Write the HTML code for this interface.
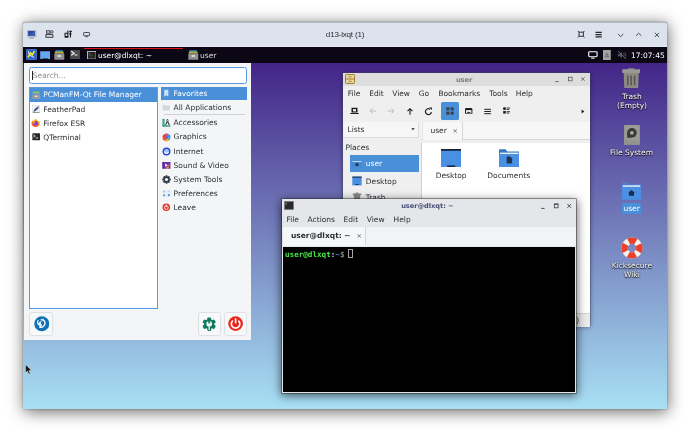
<!DOCTYPE html>
<html><head><meta charset="utf-8"><title>d13-lxqt (1)</title>
<style>
html,body{margin:0;padding:0;background:#fff;}
body{width:690px;height:432px;position:relative;overflow:hidden;font-family:"DejaVu Sans","Liberation Sans",sans-serif;font-size:7.5px;color:#2a2d33;}
.a{position:absolute;}
.t{position:absolute;white-space:pre;line-height:10px;height:10px;}
#win{will-change:transform;left:23px;top:22px;width:644.4px;height:387px;border-radius:2px 2px 0 0;box-shadow:1px 2.5px 16px rgba(0,0,0,.58),0 0 2px rgba(0,0,0,.4);background:#000;overflow:hidden;}
#tb{left:0;top:0;width:645px;height:25px;background:#dde3ed;border-top:.8px solid #b4b8c1;border-bottom:1.300px solid #e8ecf5;box-sizing:border-box;}
#panel{left:0;top:25px;width:645px;height:15.5px;background:#0b0714;}
#desk{left:0;top:40.5px;width:645px;height:346.5px;background:linear-gradient(#432588,#a8e0f4);}
/* start menu */
#menu{left:1px;top:40.5px;width:227.2px;height:277.5px;background:#f4f5f7;}
#search{left:4.8px;top:4.6px;width:216.2px;height:14.8px;border:1px solid #5b9ae1;border-radius:2.5px;background:#fff;}
#list{left:4.8px;top:24.3px;width:127.5px;height:220.4px;border:1px solid #5b9ae0;background:#fff;}
.sel{background:#4a90d9;}
.w{color:#fff;}
.btn{width:21.6px;height:22px;border:.8px solid #dfe0e4;border-radius:2.5px;background:#f7f8f9;}
/* file manager */
#fm{left:320.3px;top:51.2px;width:246.3px;height:253.3px;background:#efefef;box-shadow:0 0 0 .6px rgba(70,70,90,.6),0 1px 5px rgba(0,0,20,.45);}
#fmt{left:-.7px;top:0;width:246.3px;height:12.5px;background:#dddddd;}
/* terminal */
#term{left:259px;top:177.2px;width:294.3px;height:194px;background:#e5e6e9;box-shadow:0 1.5px 9px 1px rgba(0,0,0,.62),0 0 0 .6px rgba(40,40,50,.7);}
.dl{color:#fff;text-shadow:0 .6px 1.2px #000,0 0 1.5px rgba(0,0,0,.8);text-align:center;width:60px;}
</style></head><body>
<div id="win" class="a">
 <div id="tb" class="a">
  <svg class="a" style="left:3.6px;top:6.7px" width="10" height="9.4" viewBox="0 0 10 9.4"><rect x=".3" y=".3" width="8.800" height="6.800" rx=".7" fill="#c3c7d2" stroke="#9499aa" stroke-width=".5"/><rect x="1.100" y="1" width="6.800" height="5" fill="#2c4a9c"/><path d="M1.100 6L7.900 1V6Z" fill="#3a5db3"/><path d="M3.200 7.200h3l1 1.500H2.200z" fill="#a4a8b5"/><path d="M1.800 8.900h5.800" stroke="#b4b8c4" stroke-width=".6"/></svg>
  <svg class="a" style="left:22.2px;top:6.6px" width="9.400" height="8.600" viewBox="0 0 9.400 8.600" fill="none" stroke="#2a2d33" stroke-width=".9"><rect x="1.600" y=".8" width="3.400" height="2.400"/><circle cx="6.900" cy="1.900" r="1.250" stroke-width=".75"/><path d="M.9 6.900V4.600h7v2.300M.5 7.300h7.800" stroke-width=".95"/></svg>
  <svg class="a" style="left:41.2px;top:6.6px" width="8.600" height="8.400" viewBox="0 0 8.600 8.400" fill="none" stroke="#15171b" stroke-width="1.100"><path d="M3.900 .5V6.600H1.100V3.200H3.900M6.400 1V7.400M5.300 1.400h2.500M5.300 3.900h2.200M.8 7.300h3.600"/></svg>
  <svg class="a" style="left:60.2px;top:9.2px" width="7.600" height="5.600" viewBox="0 0 7.600 5.600" fill="none" stroke="#2a2d33" stroke-width=".85"><rect x=".6" y=".5" width="6" height="3.300" rx=".7"/><path d="M2.500 4.700h2.200" stroke-width=".9"/></svg>
  <div class="t" style="left:297px;top:6.9px;width:50px;text-align:center;font-family:'Liberation Sans',sans-serif;font-size:8.100px;letter-spacing:-.22px;color:#2b2f35;">d13-lxqt (1)</div>
  <svg class="a" style="left:553.8px;top:7px" width="8.4" height="8.4" viewBox="0 0 9 9" fill="none" stroke="#23262b" stroke-width="1"><rect x="2.2" y="2.3" width="4.6" height="4.4"/><path d="M.8 .9l1.4 1.4M8.2 .9L6.8 2.3M.8 8.1l1.4-1.4M8.2 8.1L6.8 6.7" stroke-width=".9"/></svg>
  <svg class="a" style="left:572px;top:8.3px" width="7.6" height="7.6" viewBox="0 0 8 8" stroke="#23262b" stroke-width="1.3"><path d="M.5 1.4h6.6M.5 3.8h6.6M.5 6.2h6.6"/></svg>
  <svg class="a" style="left:593.5px;top:9.6px" width="8" height="5" viewBox="0 0 8 5" fill="none" stroke="#3a3e45" stroke-width=".9"><path d="M1 1l2.7 2.6L6.4 1"/></svg>
  <svg class="a" style="left:611.8px;top:9.2px" width="8" height="5" viewBox="0 0 8 5" fill="none" stroke="#3a3e45" stroke-width=".9"><path d="M1 3.8l2.7-2.6L6.4 3.8"/></svg>
  <svg class="a" style="left:631px;top:9.3px" width="6" height="6" viewBox="0 0 6 6" fill="none" stroke="#3a3e45" stroke-width=".9"><path d="M.8 .8l4.2 4.2M5 .8L.8 5"/></svg>
 </div>
 <div id="panel" class="a">
  <svg class="a" style="left:3px;top:2.200px" width="11" height="10.800" viewBox="0 0 11 10.800"><rect x=".3" y=".3" width="10.400" height="10.200" rx="1.200" fill="#2a5cd2" stroke="#5a96ea" stroke-width=".7"/><path d="M2.500 2.600Q2.400 6.400 7.800 8.300" fill="none" stroke="#cfdcf6" stroke-width="1.200" stroke-linecap="round"/><path d="M2 8.500L4.600 3.900 6.300 5.900 8.500 2" fill="none" stroke="#f6e61c" stroke-width="1.600" stroke-linejoin="miter" stroke-linecap="butt"/></svg>
  <svg class="a" style="left:16.900px;top:3.900px" width="10.400" height="8.400" viewBox="0 0 10.400 8.400"><path d="M.2 .2h10v8H8V7.500H2.500V8.200H.2z" fill="#64a7f2"/></svg>
  <svg class="a" style="left:31.200px;top:2.800px" width="10.600" height="10.200" viewBox="0 0 10.600 10.200"><path d="M1.700 .3h7l.5 1.200H1.200z" fill="#3f8ae0"/><path d="M1.200 1.300h8l.4 1.100H.9z" fill="#5fbf6a"/><path d="M.9 2.300h8.700l.3 1.200H.6z" fill="#f0c23a"/><rect x=".3" y="3.400" width="10" height="6.400" rx=".5" fill="#8e8e8e"/><rect x="3.500" y="5.200" width="3.600" height="1.500" rx=".3" fill="#ececec"/></svg>
  <svg class="a" style="left:47px;top:3.100px" width="10.400" height="9.200" viewBox="0 0 10.400 9.200"><rect x=".1" y=".1" width="10.100" height="9" rx=".5" fill="#4a4a4a"/><path d="M1.200 1.300l3 2-3 2" fill="none" stroke="#fff" stroke-width="1.100"/><path d="M4.600 5h2.800" stroke="#fff" stroke-width="1.200"/></svg>
  <div class="a" style="left:61px;top:.6px;width:98.800px;height:1.600px;background:#e0151a"></div>
  <svg class="a" style="left:63.700px;top:3.800px" width="9.600" height="8.600" viewBox="0 0 9.600 8.600"><rect x=".5" y=".5" width="8.600" height="7.600" fill="#242424" stroke="#c4c4c4" stroke-width=".9"/><path d="M1.800 2.200l1.400 1-1.400 1M3.600 4.800h1.600" fill="none" stroke="#8a8a8a" stroke-width=".6"/></svg>
  <div class="t w" style="left:74.9px;top:4.2px;">user@dlxqt: ~</div>
  <svg class="a" style="left:165px;top:2.800px" width="10.600" height="10.200" viewBox="0 0 10.600 10.200"><path d="M1.700 .3h7l.5 1.200H1.200z" fill="#3f8ae0"/><path d="M1.200 1.300h8l.4 1.100H.9z" fill="#5fbf6a"/><path d="M.9 2.300h8.700l.3 1.200H.6z" fill="#f0c23a"/><rect x=".3" y="3.400" width="10" height="6.400" rx=".5" fill="#8e8e8e"/><rect x="3.500" y="5.200" width="3.600" height="1.500" rx=".3" fill="#ececec"/></svg>
  <div class="t" style="left:177px;top:4.2px;color:#dcdcdc">user</div>
  <svg class="a" style="left:565px;top:4px" width="10" height="8" viewBox="0 0 10 8" fill="none" stroke="#fff" stroke-width="1.1"><rect x=".7" y=".7" width="8.4" height="5" rx=".9"/><path d="M3.2 7.2h3.4" stroke-width="1"/></svg>
  <svg class="a" style="left:580.400px;top:2.700px" width="7.800" height="10.200" viewBox="0 0 7.800 10.200"><rect x="0" y="0" width="7.800" height="10.200" fill="#a3a3a0"/><path d="M3.900 2.400L6 5.400H1.800z" fill="#6f6f6f"/><rect x="1.800" y="6.100" width="4.200" height="1.100" fill="#6f6f6f"/></svg>
  <svg class="a" style="left:593.5px;top:2.8px" width="10" height="10" viewBox="0 0 10 10" fill="none" stroke="#55565f" stroke-width=".9"><path d="M1.2 3.8h1.6L5 1.8v6.4L2.8 6.2H1.2z" fill="#55565f" stroke="none"/><path d="M6.3 3.2a2.4 2.4 0 0 1 0 3.6M7.5 2a4 4 0 0 1 0 6"/><path d="M1 1l8 8" stroke="#6a6b75" stroke-width=".9"/></svg>
  <div class="t w" style="left:608px;top:4.2px;">17:07:45</div>
 </div>
 <div id="desk" class="a"></div>

 <svg class="a" style="left:599.100px;top:46px" width="18.400" height="20.200" viewBox="0 0 18.400 20.200"><rect x="6" y=".2" width="6.400" height="1.600" rx=".4" fill="#8f8f88"/><rect x=".2" y="1.200" width="18" height="3.800" rx=".5" fill="#9a9a92"/><path d="M1.700 5h15l-.5 14.400q0 .6-.6.600H2.800q-.6 0-.6-.600z" fill="#8b8b84"/><path d="M5.800 7.400v9.800M9.200 7.400v9.800M12.600 7.400v9.800" stroke="#55554f" stroke-width="1.500"/></svg>
 <div class="t dl" style="left:578.8px;top:69.7px">Trash</div>
 <div class="t dl" style="left:579px;top:79px">(Empty)</div>
 <svg class="a" style="left:600.600px;top:103px" width="16" height="19.800" viewBox="0 0 16 19.800"><rect x=".1" y=".1" width="15.800" height="19.600" rx=".6" fill="#9b9b95"/><rect x=".1" y="15.400" width="15.800" height="4.300" fill="#93938d"/><circle cx="7.900" cy="7.800" r="4.800" fill="#3a3a3a"/><path d="M3.100 7.800v5h4.800z" fill="#3a3a3a"/><circle cx="7.900" cy="7.800" r="1.900" fill="#a9a9a3"/></svg>
 <div class="t dl" style="left:578.5px;top:125.6px">File System</div>
 <svg class="a" style="left:599px;top:160.200px" width="19" height="17.800" viewBox="0 0 19 17.800"><path d="M0 .9q0-.8.800-.8h5.400l1.600 2h10.400q.8 0 .8.800v2H0z" fill="#4a90e2" opacity=".38"/><rect x="0" y="2.900" width="19" height="14.800" rx=".6" fill="#4a90e2"/><rect x=".8" y="3.400" width="17.400" height="1.300" fill="#f4f8fd"/><path d="M9.500 7.900l3.500 3h-1v2.900H7v-2.900H6z" fill="#1c2c4a"/></svg>
 <div class="a" style="left:599px;top:181.200px;width:19px;height:11.200px;background:#4a90d9"></div>
 <div class="t w" style="left:578.600px;top:182px;width:60px;text-align:center">user</div>
 <svg class="a" style="left:597.700px;top:214.700px" width="22" height="22" viewBox="0 0 22 22"><circle cx="11" cy="11" r="7.400" fill="none" stroke="#f1f1f1" stroke-width="6.400"/><circle cx="11" cy="11" r="7.400" fill="none" stroke="#e9412c" stroke-width="6.400" stroke-dasharray="7.490 4.134" stroke-dashoffset="3.745"/></svg>
 <div class="t dl" style="left:578.900px;top:238.700px">Kicksecure</div>
 <div class="t dl" style="left:578.900px;top:247.500px">Wiki</div>
 <svg class="a" style="left:1.7px;top:342.1px" width="7.4" height="11.1" viewBox="0 0 8 12"><path d="M.6 .6v9l2.100-2 1.500 3.400 1.500-.7L4.200 7h2.900z" fill="#111" stroke="#eee" stroke-width=".5"/></svg>
 <div id="menu" class="a">
  <div id="search" class="a"><div class="t" style="left:3px;top:2.5px;color:#8a8d92;">Search...</div><div class="a" style="left:2.5px;top:2.5px;width:.8px;height:9.5px;background:#222"></div></div>
  <div id="list" class="a">
<div class="a sel" style="left:0;top:-0.2px;width:127.5px;height:14px"><svg class="a" style="left:2.1px;top:3.2px" width="8.4" height="8.4" viewBox="0 0 10.6 10"><path d="M1.6 .4h7.4l.5 1.2H1.1z" fill="#6fbf4a"/><path d="M1.1 1.6h8.4l.3 1.2H.8z" fill="#f3d23c"/><path d="M.8 2.8h9l.3 1.2H.5z" fill="#4a90e2"/><rect x=".4" y="4" width="9.8" height="5.8" rx=".5" fill="#9a9a9a"/><rect x="3.6" y="5.6" width="3.4" height="1.6" fill="#e8e8e8"/></svg><div class="t w" style="left:13.5px;top:2.4px">PCManFM-Qt File Manager</div></div>
<div class="a" style="left:0;top:13.9px;width:127.5px;height:14px"><svg class="a" style="left:2.1px;top:3.2px" width="8.4" height="8.4" viewBox="0 0 10 10"><rect x=".8" y=".6" width="8.4" height="8.8" fill="#f4f4f4" stroke="#c9c9c9" stroke-width=".5"/><path d="M1.6 8.2C2.4 5 5 2.2 8.6 1.6 7.8 4.6 5.4 7.2 1.6 8.2z" fill="#3f5e8c"/><path d="M1.2 8.9h7.6" stroke="#555" stroke-width=".7"/></svg><div class="t" style="left:13.5px;top:3px">FeatherPad</div></div>
<div class="a" style="left:0;top:27.8px;width:127.5px;height:14px"><svg class="a" style="left:1.500px;top:2.700px" width="9.400" height="9.400" viewBox="0 0 10 10"><defs><linearGradient id="ffg" x1=".7" y1="0" x2=".2" y2="1"><stop offset="0" stop-color="#ffd43a"/><stop offset=".5" stop-color="#ff8a1c"/><stop offset="1" stop-color="#f5352a"/></linearGradient></defs><path d="M5 .7C6 1 6.800 1.700 7.400 2.600 8.600 3 9.500 4.300 9.500 5.700 9.500 8 7.500 9.700 5 9.700 2.500 9.700 .5 8 .5 5.600 .5 4.300 1 3.200 1.900 2.400 1.900 3 2.200 3.400 2.600 3.600 3 2.400 3.900 1.300 5 .7z" fill="url(#ffg)"/><circle cx="5.200" cy="5.600" r="2.400" fill="#7a3fd6"/><path d="M2.800 4.400C3.500 3.800 4.500 3.900 5.100 4.500 4.300 4.500 3.800 5 3.800 5.700 3.100 5.600 2.700 5 2.800 4.400z" fill="#ffb52e"/></svg><div class="t" style="left:13.5px;top:3px">Firefox ESR</div></div>
<div class="a" style="left:0;top:41.9px;width:127.5px;height:14px"><svg class="a" style="left:2.1px;top:3.8px" width="8.4" height="7.4" viewBox="0 0 10 9"><rect x=".3" y=".3" width="9.4" height="8.4" rx=".5" fill="#2b2b2b"/><path d="M1.6 2l2.2 1.6-2.2 1.6" fill="none" stroke="#fff" stroke-width=".9"/><path d="M4.4 6h3" stroke="#fff" stroke-width=".9"/></svg><div class="t" style="left:13.5px;top:3px">QTerminal</div></div>
</div>
<div class="a sel" style="left:137.2px;top:24.4px;width:85.6px;height:13.2px"><svg class="a" style="left:1.1px;top:2.4px" width="8.6" height="8.6" viewBox="0 0 10 10"><path d="M2.6 1h4.8v8L5 7.2 2.6 9z" fill="#cfe0f6"/></svg><div class="t w" style="left:12.4px;top:2.2px">Favorites</div></div>
<div class="a" style="left:137.2px;top:38.3px;width:85.6px;height:13.2px"><svg class="a" style="left:1.1px;top:2.4px" width="8.6" height="8.6" viewBox="0 0 10 10"><path d="M.8 2h3.2l.9 1h4.3v5.6H.8z" fill="#d6d7da"/></svg><div class="t" style="left:12.4px;top:2.2px">All Applications</div></div>
<div class="a" style="left:137.2px;top:53.7px;width:85.6px;height:13.2px"><svg class="a" style="left:.9px;top:2.2px" width="9" height="9" viewBox="0 0 10 10"><rect x=".6" y="1" width="2.200" height="8" fill="#15906a"/><path d="M1 2.500h1M1 4h1M1 5.500h1M1 7h1" stroke="#d8f0e6" stroke-width=".5"/><path d="M5.600 1l.9 0 .3 2.200 1.900 4.600-1 .5-1.600-3.600-1.600 3.600-1-.5 1.900-4.600z" fill="#2f3437"/><circle cx="6" cy="2.600" r="1" fill="#f3f4f6" stroke="#2f3437" stroke-width=".6"/><rect x=".6" y="8.300" width="8.800" height="1.300" fill="#15906a"/></svg><div class="t" style="left:12.4px;top:2px">Accessories</div></div>
<div class="a" style="left:137.2px;top:67.9px;width:85.6px;height:13.2px"><svg class="a" style="left:.9px;top:2.2px" width="9" height="9" viewBox="0 0 10 10"><circle cx="5" cy="2.700" r="2.300" fill="#e9488e"/><circle cx="7.100" cy="3.800" r="2.300" fill="#3d8bf0"/><circle cx="7.100" cy="6.200" r="2.300" fill="#35b4e6"/><circle cx="5" cy="7.300" r="2.300" fill="#f7b52c"/><circle cx="2.900" cy="6.200" r="2.300" fill="#f2602a"/><circle cx="2.900" cy="3.800" r="2.300" fill="#f0453a"/><circle cx="5" cy="5" r="1.700" fill="#8a4fd0"/></svg><div class="t" style="left:12.4px;top:2px">Graphics</div></div>
<div class="a" style="left:137.2px;top:82.1px;width:85.6px;height:13.2px"><svg class="a" style="left:.9px;top:2.2px" width="9" height="9" viewBox="0 0 10 10"><circle cx="5" cy="5" r="4.400" fill="#2748d4"/><circle cx="5" cy="5" r="2.800" fill="#9cc8ff"/><path d="M2.300 5.300Q5 7 7.700 5.300 7.200 7.800 5 7.800 2.800 7.800 2.300 5.300z" fill="#f4f8ff"/></svg><div class="t" style="left:12.4px;top:2px">Internet</div></div>
<div class="a" style="left:137.2px;top:96.2px;width:85.6px;height:13.2px"><svg class="a" style="left:.9px;top:2.2px" width="9" height="9" viewBox="0 0 10 10"><rect x=".6" y="1.200" width="8.800" height="7.400" rx=".5" fill="#6a2fb5"/><rect x=".6" y="1.200" width="1.400" height="7.400" fill="#4d1f93"/><path d="M3.400 2.800l3.200 1.900-3.200 1.900z" fill="#f1e6ff"/><circle cx="6" cy="7.600" r="1.300" fill="#f79a1e"/><path d="M7 7.600V4.400l1.800.6" fill="none" stroke="#f79a1e" stroke-width=".8"/></svg><div class="t" style="left:12.4px;top:2px">Sound &amp; Video</div></div>
<div class="a" style="left:137.2px;top:110.3px;width:85.6px;height:13.2px"><svg class="a" style="left:.9px;top:2.2px" width="9" height="9" viewBox="0 0 10 10"><g fill="#2b3a48"><rect x="4" y=".3" width="2" height="9.400" rx=".3" transform="rotate(0 5 5)"/><rect x="4" y=".3" width="2" height="9.400" rx=".3" transform="rotate(45 5 5)"/><rect x="4" y=".3" width="2" height="9.400" rx=".3" transform="rotate(90 5 5)"/><rect x="4" y=".3" width="2" height="9.400" rx=".3" transform="rotate(135 5 5)"/><circle cx="5" cy="5" r="3.500"/></g><circle cx="5" cy="5" r="1.800" fill="#f3f4f6"/></svg><div class="t" style="left:12.4px;top:2px">System Tools</div></div>
<div class="a" style="left:137.2px;top:124.5px;width:85.6px;height:13.2px"><svg class="a" style="left:.9px;top:2.2px" width="9" height="9" viewBox="0 0 10 10"><rect x=".8" y="1.400" width="8.400" height="7.200" fill="#e3edf7"/><rect x="1.200" y="1.800" width="2.200" height="1.800" fill="#9cc4ee"/><rect x="6.400" y="1.800" width="2.400" height="1.800" fill="#c4daf2"/><rect x="1.200" y="6" width="1.800" height="2" fill="#4a90e2"/><rect x="6.800" y="5.600" width="1.800" height="2.400" fill="#4a90e2"/><rect x="3.800" y="4" width="2.200" height="1.600" fill="#f6f9fc"/></svg><div class="t" style="left:12.4px;top:2px">Preferences</div></div>
<div class="a" style="left:137.2px;top:138.6px;width:85.6px;height:13.2px"><svg class="a" style="left:1.1px;top:2.4px" width="8.6" height="8.6" viewBox="0 0 10 10"><circle cx="5" cy="5" r="4.400" fill="#e5332a"/><circle cx="5" cy="5.300" r="2.200" fill="none" stroke="#fff" stroke-width=".9"/><path d="M5 2v3" stroke="#fff" stroke-width="1"/><path d="M5 1.600v3.600" stroke="#e5332a" stroke-width="2.200" opacity="0"/></svg><div class="t" style="left:12.4px;top:2px">Leave</div></div>
<div class="a" style="left:139.5px;top:51.500px;width:81.500px;height:1px;background:#cdcfd4"></div>
<div class="a btn" style="left:5.200px;top:249.500px"><svg class="a" style="left:3.400px;top:3.400px" width="15.600" height="15.600" viewBox="0 0 16 16"><circle cx="8" cy="8" r="7.700" fill="#0f70b6"/><path d="M4.200 4.600C3 6.400 3.800 8.800 5.800 9.400 5 8.200 5.400 6.800 6.600 6.200 6 7.400 6.400 8.800 7.600 9.400" fill="none" stroke="#f2f8fd" stroke-width="1.300" stroke-linecap="round"/><path d="M7.600 3.800C10.400 3.600 12 6.200 11 8.800 10.200 10.800 8.200 11.800 6 11.400" fill="none" stroke="#f2f8fd" stroke-width="1.500" stroke-linecap="round"/><path d="M5 11.200l2.200-1.400.2 2.800z" fill="#f2f8fd"/><path d="M8.400 3.200l1.600-.6-.4 1.800z" fill="#f2f8fd"/></svg></div>
<div class="a btn" style="left:173.600px;top:249.700px"><svg class="a" style="left:3.700px;top:3.500px" width="14.400" height="14.400" viewBox="0 0 14 14"><g fill="#0f7a5e"><rect x="5.100" y=".4" width="3.800" height="13.200" rx="1.100" transform="rotate(0 7 7)"/><rect x="5.100" y=".4" width="3.800" height="13.200" rx="1.100" transform="rotate(60 7 7)"/><rect x="5.100" y=".4" width="3.800" height="13.200" rx="1.100" transform="rotate(120 7 7)"/><circle cx="7" cy="7" r="4.900"/></g><circle cx="7" cy="6.700" r="2.700" fill="#f7f8f9"/><rect x="6.100" y="2.600" width="1.800" height="3.600" fill="#0f7a5e"/><path d="M7 9v3.600" stroke="#e8d8da" stroke-width="1.500"/></svg></div>
<div class="a btn" style="left:199.500px;top:249.700px"><svg class="a" style="left:3.400px;top:3.300px" width="15.200" height="15.200" viewBox="0 0 14 14"><circle cx="7" cy="7" r="6.800" fill="#ea251b"/><path d="M4.500 4.300a3.900 3.900 0 1 0 5 0" fill="none" stroke="#fff" stroke-width="1.500"/><path d="M7 2.200v4.600" stroke="#fff" stroke-width="1.500"/></svg></div>
 </div>
 <div id="fm" class="a"><div class="a" style="left:.7px;top:0;width:245px;height:253px"><div id="fmt" class="a">
  <svg class="a" style="left:1.3px;top:1.3px" width="10" height="10" viewBox="0 0 10 10"><rect x=".5" y=".5" width="9" height="9" rx=".8" fill="#e8d9a8" stroke="#a67c2a" stroke-width="1"/><path d="M.5 5h9" stroke="#a67c2a" stroke-width="1"/><path d="M3.400 2.800h3.200M3.400 7.300h3.200" stroke="#a67c2a" stroke-width=".9"/></svg>
  <div class="t" style="left:100.8px;top:1.400px;width:40px;text-align:center;font-weight:bold;font-size:6.600px;color:#7a7a7a">user</div>
  <svg class="a" style="left:209.500px;top:3.200px" width="32" height="7" viewBox="0 0 32 7" fill="none" stroke="#5e5e5e" stroke-width=".9"><path d="M2.400 5.600h3.200"/><rect x="15.500" y="1.200" width="3.600" height="3.600" stroke-width=".8"/><path d="M28.200 1.200l3.400 3.600M31.600 1.200l-3.400 3.600" stroke-width=".8"/></svg>
 </div>
 <div class="a" style="left:0;top:12.500px;width:245px;height:14.500px;background:#efefef">
  <div class="t" style="left:3.8px;top:3.600px">File</div><div class="t" style="left:25.2px;top:3.600px">Edit</div><div class="t" style="left:48.2px;top:3.600px">View</div><div class="t" style="left:74.8px;top:3.600px">Go</div><div class="t" style="left:94.4px;top:3.600px">Bookmarks</div><div class="t" style="left:145.2px;top:3.600px">Tools</div><div class="t" style="left:171.8px;top:3.600px">Help</div>
 </div>
 <div class="a" style="left:0;top:27px;width:245px;height:22px;background:#efefef">
  <svg class="a" style="left:5.900px;top:6.700px" width="9" height="8" viewBox="0 0 9 8"><path d="M1.500 .7h6v4.900h-6z" fill="#1d1d1d"/><rect x="3" y="2.100" width="3" height="2.300" fill="#efefef"/><path d="M.3 6.500h8.400" stroke="#1d1d1d" stroke-width="1.200"/></svg>
  <svg class="a" style="left:24.7px;top:7px" width="8" height="8" viewBox="0 0 8 8" fill="none" stroke="#bdbdbd" stroke-width="1"><path d="M7.200 4H1.200M3.600 1.400L1 4l2.600 2.600"/></svg>
  <svg class="a" style="left:43px;top:7px" width="8" height="8" viewBox="0 0 8 8" fill="none" stroke="#bdbdbd" stroke-width="1"><path d="M.8 4h6M4.400 1.400L7 4 4.400 6.600"/></svg>
  <svg class="a" style="left:61.8px;top:6.500px" width="8" height="9" viewBox="0 0 8 9" fill="none" stroke="#1d1d1d" stroke-width="1.100"><path d="M4 7.700V1.800M1.500 4.200L4 1.700 6.500 4.200"/></svg>
  <svg class="a" style="left:79.9px;top:6.500px" width="9" height="9" viewBox="0 0 9 9" fill="none" stroke="#1d1d1d" stroke-width="1.200"><path d="M7.400 5.200A3 3 0 1 1 6.200 2.200"/><path d="M5.300 .5h2.600v2.600z" fill="#1d1d1d" stroke="none"/></svg>
  <div class="a" style="left:97.5px;top:1.800px;width:18px;height:18px;background:#4a90d9;border-radius:1.500px"><svg class="a" style="left:5px;top:5px" width="8" height="8" viewBox="0 0 8 8" fill="#3b4048"><rect x=".3" y=".3" width="3.100" height="3.100"/><rect x="4.600" y=".3" width="3.100" height="3.100"/><rect x=".3" y="4.600" width="3.100" height="3.100"/><rect x="4.600" y="4.600" width="3.100" height="3.100"/></svg></div>
  <svg class="a" style="left:121.300px;top:7.800px" width="7.400" height="6.400" viewBox="0 0 7.400 6.400"><rect x=".5" y=".5" width="6.400" height="5.400" rx=".4" fill="none" stroke="#1d1d1d" stroke-width="1"/><rect x=".5" y=".5" width="6.400" height="1.600" fill="#1d1d1d"/><path d="M1.800 5l1.300-1.500 1 .9.700-.5.900 1.100z" fill="#1d1d1d"/></svg>
  <svg class="a" style="left:140px;top:7.600px" width="7.200" height="7" viewBox="0 0 7.200 7" stroke="#1d1d1d" stroke-width="1"><path d="M.3 1.300h6.600M.3 3.500h6.600M.3 5.700h6.600"/></svg>
  <svg class="a" style="left:158.600px;top:7.200px" width="7.600" height="7.200" viewBox="0 0 7.600 7.200" fill="#1d1d1d"><rect x=".2" y=".3" width="2.600" height="2.600"/><rect x=".2" y="4" width="2.600" height="2.600"/><rect x="3.600" y=".6" width="3.800" height=".9"/><rect x="3.600" y="2" width="2.600" height=".8"/><rect x="3.600" y="4.300" width="3.800" height=".9"/><rect x="3.600" y="5.700" width="2.600" height=".8"/></svg>
  <svg class="a" style="left:237.5px;top:8.500px" width="4" height="5" viewBox="0 0 4 5"><path d="M.6 .4L3.400 2.500.6 4.600z" fill="#1d1d1d"/></svg>
 </div>
 <div class="a" style="left:0;top:49px;width:74px;height:15px;background:#f6f6f6;border-bottom:.8px solid #dcdcdc;border-right:.8px solid #dcdcdc">
  <div class="t" style="left:3.500px;top:2.600px">Lists</div>
  <svg class="a" style="left:66.800px;top:6.300px" width="4" height="2.600" viewBox="0 0 5 3"><path d="M.3 .3h4.400L2.500 2.800z" fill="#2a2a2a"/></svg>
 </div>
 <div class="a" style="left:77.500px;top:49px;width:168.500px;height:17.300px;background:#f7f7f7;border-bottom:.8px solid #d8d8d8"></div>
 <div class="a" style="left:78px;top:49px;width:39.500px;height:18px;background:#f8f8f8;border-right:.8px solid #d6d6d6;border-left:.8px solid #e0e0e0">
  <div class="t" style="left:7.400px;top:3.600px">user</div><div class="t" style="left:29.600px;top:3.800px;font-size:6.500px;color:#555">×</div>
 </div>
 <div class="t" style="left:1.400px;top:69.800px">Places</div>
 <div class="a sel" style="left:5.700px;top:81.800px;width:69.300px;height:17px">
  <svg class="a" style="left:2.500px;top:4px" width="10" height="9" viewBox="0 0 10 9"><path d="M.3 .6h3.400l.8.900h5.200v7H.3z" fill="#4587d2"/><rect x=".3" y="2" width="9.400" height=".8" fill="#dce9f8"/><path d="M5 3.800l2 1.700H6.400v1.600H3.600V5.500H3z" fill="#1f3554"/></svg>
  <div class="t w" style="left:16.100px;top:3.600px">user</div>
 </div>
 <div class="a" style="left:5.700px;top:98.800px;width:69.300px;height:17px">
  <svg class="a" style="left:2.500px;top:3.800px" width="10" height="10" viewBox="0 0 10 10"><rect x=".3" y=".6" width="9.400" height="8.800" fill="#4a90e2"/><rect x=".3" y=".6" width="9.400" height="1.200" fill="#1f3554"/><rect x="3.200" y="8" width="3.600" height=".9" fill="#1f3554"/></svg>
  <div class="t" style="left:16.100px;top:4.600px">Desktop</div>
 </div>
 <div class="a" style="left:5.700px;top:115.800px;width:69.300px;height:17px">
  <svg class="a" style="left:2.500px;top:3px" width="10" height="10" viewBox="0 0 10 10"><path d="M1.600 3h6.800l-.6 6.600H2.200z" fill="#8a8a8a"/><rect x=".8" y="1.600" width="8.400" height="1.300" fill="#777"/><rect x="3.600" y=".6" width="2.800" height="1" fill="#777"/></svg>
  <div class="t" style="left:16.100px;top:3.600px">Trash</div>
 </div>
 <div class="a" style="left:77.400px;top:69.600px;width:167.300px;height:170.200px;background:#fff;border-left:.6px solid #d0d0d0"></div>
 <svg class="a" style="left:97px;top:75.7px" width="20.500" height="18.500" viewBox="0 0 20.500 18.500"><rect x="0" y="0" width="20.500" height="18.500" rx=".8" fill="#4a90e2"/><rect x="0" y="0" width="20.500" height="1.800" fill="#16233a"/><rect x="6.200" y="16.400" width="8" height="1.500" fill="#16233a"/></svg>
 <div class="t" style="left:82.2px;top:98px;width:50px;text-align:center">Desktop</div>
 <svg class="a" style="left:154.9px;top:75.5px" width="20.500" height="18.700" viewBox="0 0 20.500 18.700"><path d="M0 1.200q0-.9.900-.9h5.600l1.800 2.200h11.300q.9 0 .9.900v14.400q0 .9-.9.900H.9q-.9 0-.9-.9z" fill="#3577c4"/><rect x="1" y="3.600" width="18.500" height="1.400" fill="#e6f0fb"/><path d="M0 5h20.500v12.800q0 .9-.9.900H.9q-.9 0-.9-.9z" fill="#4a90e2"/><path d="M7.600 7.600h3.600l1.900 1.900v4.900H7.600z" fill="#1f3554"/></svg>
 <div class="t" style="left:134.7px;top:98px;width:60px;text-align:center">Documents</div>
 <div class="a" style="left:-.7px;top:239.600px;width:246.300px;height:13.700px;background:#ececec;border-top:.6px solid #d4d4d4"><div class="t" style="right:10.500px;top:2.200px">Free space: 14.3 GiB (Total: 19.5 GiB)</div></div>
</div> </div>
 <div id="term" class="a">
  <svg class="a" style="left:1.600px;top:2px" width="10" height="9" viewBox="0 0 10 9"><rect x=".3" y=".3" width="9.400" height="8.400" fill="#2a2a2a" stroke="#8d8d8d" stroke-width=".6"/><path d="M1.500 1.800l1.300.9-1.300.9" fill="none" stroke="#ccc" stroke-width=".6"/></svg>
  <div class="t" style="left:105.4px;top:2px;width:80px;text-align:center;font-weight:bold;font-size:6.600px;color:#474d78">user@dlxqt: ~</div>
  <svg class="a" style="left:257.4px;top:3.400px" width="34" height="7" viewBox="0 0 34 7" fill="none" stroke="#3c3f4a" stroke-width=".9"><path d="M2.200 5.400h3.400"/><rect x="15.300" y="1" width="3.800" height="3.800" stroke-width=".8"/><path d="M15.300 1.300h3.800" stroke-width="1.100"/><path d="M28.400 1l3.600 3.800M32 1l-3.600 3.800" stroke-width=".9"/></svg>
  <div class="a" style="left:0;top:13px;width:294.300px;height:14.500px;background:#e5e6e9">
   <div class="t" style="left:4.4px;top:3.200px">File</div><div class="t" style="left:25.6px;top:3.200px">Actions</div><div class="t" style="left:61.6px;top:3.200px">Edit</div><div class="t" style="left:84.8px;top:3.200px">View</div><div class="t" style="left:111.6px;top:3.200px">Help</div>
  </div>
  <div class="a" style="left:.5px;top:27.500px;width:293.300px;height:19.500px;background:#f2f3f5"></div>
  <div class="a" style="left:.5px;top:27.500px;width:82.500px;height:18px;background:#f5f6f8;border-right:.7px solid #d3d5da">
   <div class="t" style="left:8.400px;top:4px;font-weight:bold">user@dlxqt: ~</div><div class="t" style="left:74px;top:4.200px;font-size:6.500px;color:#555">×</div>
  </div>
  <div class="a" style="left:1px;top:47.600px;width:292.300px;height:145.600px;background:#000">
   <div class="t" style="left:2px;top:3px;font-family:'DejaVu Sans Mono','Liberation Mono',monospace;font-weight:bold;font-size:7.600px;color:#4be34b">user@dlxqt<span style="color:#d6d6d6">:</span><span style="color:#5c7be8">~</span><span style="color:#b9b9b9;font-weight:normal">$</span></div>
   <div class="a" style="left:65.400px;top:2.600px;width:4.400px;height:8.600px;border:.8px solid #a4a4a4;box-sizing:border-box"></div>
  </div>
 </div>
</div>
</body></html>
